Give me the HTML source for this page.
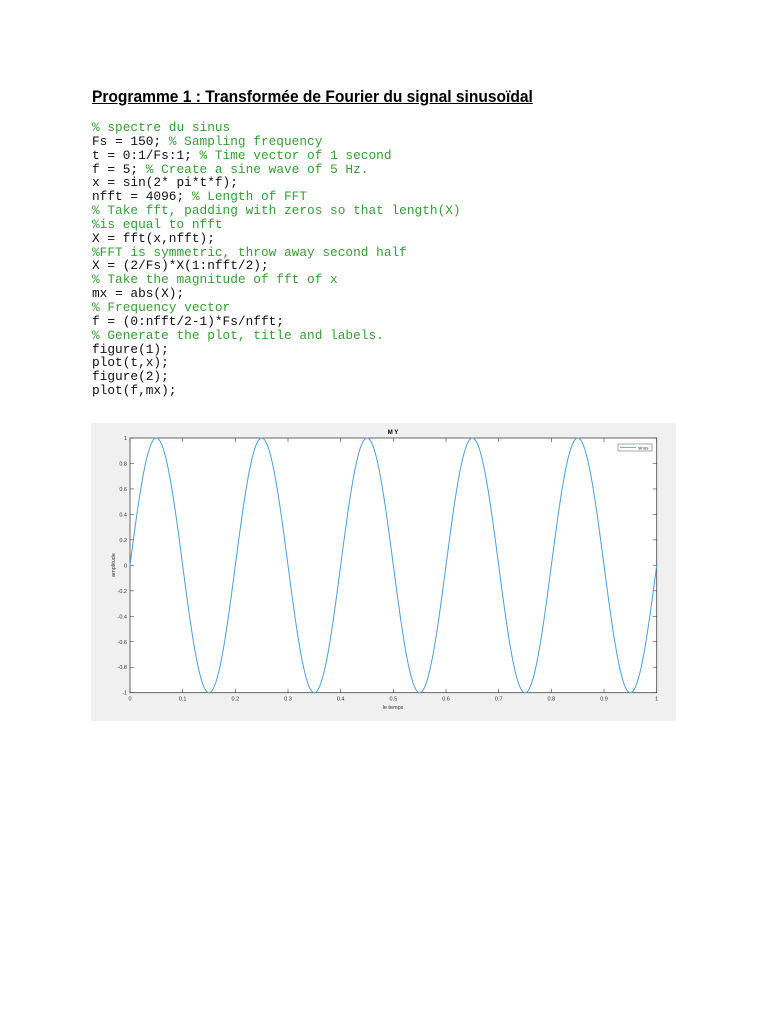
<!DOCTYPE html>
<html><head><meta charset="utf-8"><style>
body{margin:0;width:768px;height:1024px;background:#fff;position:relative;overflow:hidden}
.t{position:absolute;left:92px;top:87px;font:bold 17px "Liberation Sans",sans-serif;text-decoration:underline;transform:scaleX(0.915);transform-origin:0 0;white-space:nowrap;color:#000}
pre{position:absolute;left:92px;top:121px;margin:0;font:12.8px/13.85px "Liberation Mono",monospace;color:#111}
.g{color:#33a033}
</style></head><body>
<div class="t">Programme 1 : Transformée de Fourier du signal sinusoïdal</div>
<pre><span class="g">% spectre du sinus</span>
Fs = 150; <span class="g">% Sampling frequency</span>
t = 0:1/Fs:1; <span class="g">% Time vector of 1 second</span>
f = 5; <span class="g">% Create a sine wave of 5 Hz.</span>
x = sin(2* pi*t*f);
nfft = 4096; <span class="g">% Length of FFT</span>
<span class="g">% Take fft, padding with zeros so that length(X)</span>
<span class="g">%is equal to nfft</span>
X = fft(x,nfft);
<span class="g">%FFT is symmetric, throw away second half</span>
X = (2/Fs)*X(1:nfft/2);
<span class="g">% Take the magnitude of fft of x</span>
mx = abs(X);
<span class="g">% Frequency vector</span>
f = (0:nfft/2-1)*Fs/nfft;
<span class="g">% Generate the plot, title and labels.</span>
figure(1);
plot(t,x);
figure(2);
plot(f,mx);</pre>
<svg style="position:absolute;left:0;top:0" width="768" height="1024" font-family="Liberation Sans,sans-serif">
<rect x="91" y="423" width="585" height="298" fill="#f0f0f0"/>
<rect x="130" y="438" width="526.7" height="254.7" fill="#fff" stroke="#444" stroke-width="0.8"/>
<g id="ticks" stroke="#444" stroke-width="0.6"></g>
<g id="lbl" font-size="5.5" fill="#333"></g>
<path id="s" fill="none" stroke="#4a9fdc" stroke-width="1"/>
<text x="393" y="434" font-size="6" font-weight="bold" text-anchor="middle">M Y</text>
<text x="393" y="709" font-size="5.5" text-anchor="middle" fill="#333">le temps</text>
<text x="115" y="565" font-size="5.5" text-anchor="middle" fill="#333" transform="rotate(-90 115 565)">amplitude</text>
<rect x="618" y="444" width="34" height="7" fill="#fff" stroke="#555" stroke-width="0.5"/>
<line x1="620" y1="447.5" x2="636" y2="447.5" stroke="#4a9fdc" stroke-width="0.8"/>
<text x="638" y="449.5" font-size="4.5" fill="#333">sinus</text>
</svg>
<script>
var L=130,W=526.7,T=438,H=254.7,C=T+H/2,A=H/2,d="";
for(var i=0;i<=1500;i++){var x=i/1500;d+=(i?"L":"M")+(L+W*x).toFixed(2)+" "+(C-A*Math.sin(2*Math.PI*5*x)).toFixed(2);}
document.getElementById("s").setAttribute("d",d);
var tk="",lb="";
for(var i=0;i<=10;i++){var x=L+W*i/10;tk+='<line x1="'+x+'" y1="'+(T+H)+'" x2="'+x+'" y2="'+(T+H-4)+'"/><line x1="'+x+'" y1="'+T+'" x2="'+x+'" y2="'+(T+4)+'"/>';
lb+='<text x="'+x+'" y="'+(T+H+8)+'" text-anchor="middle">'+(i==0?"0":i==10?"1":(i/10).toFixed(1))+'</text>';}
for(var j=0;j<=10;j++){var v=1-j*0.2,y=T+H*j/10;tk+='<line x1="'+L+'" y1="'+y+'" x2="'+(L+4)+'" y2="'+y+'"/><line x1="'+(L+W)+'" y1="'+y+'" x2="'+(L+W-4)+'" y2="'+y+'"/>';
var s=Math.abs(v)<1e-9?"0":(Math.abs(Math.abs(v)-1)<1e-9?(v>0?"1":"-1"):v.toFixed(1));
lb+='<text x="'+(L-3)+'" y="'+(y+2)+'" text-anchor="end">'+s+'</text>';}
document.getElementById("ticks").innerHTML=tk;document.getElementById("lbl").innerHTML=lb;
</script>
</body></html>
